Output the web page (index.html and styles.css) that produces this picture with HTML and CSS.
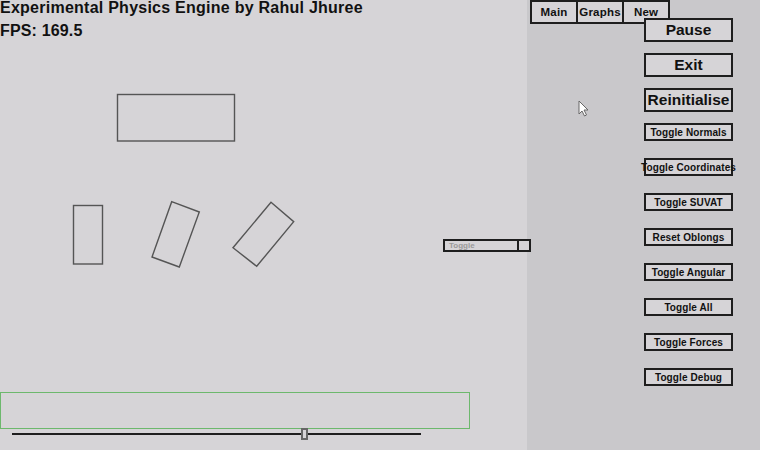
FILE: index.html
```html
<!DOCTYPE html>
<html>
<head>
<meta charset="utf-8">
<link rel="stylesheet" href="styles.css">
</head>
<body>
<div class="app">
  <div class="main">
    <svg class="world" width="527" height="450" viewBox="0 0 527 450">
      <g fill="none" stroke="#555" stroke-width="1.4">
        <rect x="117.5" y="94.5" width="117" height="46.5"/>
        <rect x="73.5" y="205.5" width="29" height="58.5"/>
        <polygon points="171.7,201.7 199.3,212 179.3,267 152,257"/>
        <polygon points="271,202.3 293.7,221.7 256.7,266.3 233,247.7"/>
      </g>
    </svg>
    <div class="title">Experimental Physics Engine by Rahul Jhuree</div>
    <div class="fps">FPS: 169.5</div>
    <div class="spacer"></div>
    <div class="console"></div>
    <div class="slider"><div class="knob"></div></div>
  </div>
  <div class="panel">
    <div class="tabs">
      <div class="tab">Main</div>
      <div class="tab">Graphs</div>
      <div class="tab">New</div>
    </div>
    <div class="buttons">
      <div class="btn big">Pause</div>
      <div class="btn big">Exit</div>
      <div class="btn big">Reinitialise</div>
      <div class="btn small">Toggle Normals</div>
      <div class="btn small">Toggle Coordinates</div>
      <div class="btn small">Toggle SUVAT</div>
      <div class="btn small">Reset Oblongs</div>
      <div class="btn small">Toggle Angular</div>
      <div class="btn small">Toggle All</div>
      <div class="btn small">Toggle Forces</div>
      <div class="btn small">Toggle Debug</div>
    </div>
  </div>
  <div class="toggle"><span class="toggle-label">Toggle</span><span class="toggle-box"></span></div>
  <svg class="cursor" width="12" height="18" viewBox="0 0 12 18">
    <path d="M1 1 L1 14 L4 11 L6.5 16 L8.5 15 L6 10 L10 10 Z" fill="#fff" stroke="#666" stroke-width="1" stroke-linejoin="round"/>
  </svg>
</div>
</body>
</html>
```

FILE: styles.css
```css
html, body {
  margin: 0;
  padding: 0;
}
body {
  width: 760px;
  height: 450px;
  overflow: hidden;
  background: #d6d4d7;
  font-family: "Liberation Sans", Arial, sans-serif;
  color: #111;
}
.app {
  position: relative;
  display: flex;
  width: 760px;
  height: 450px;
}
.main {
  position: relative;
  width: 527px;
  height: 450px;
  display: flex;
  flex-direction: column;
  padding-bottom: 15px;
  box-sizing: border-box;
}
.world {
  position: absolute;
  left: 0;
  top: 0;
}
.title {
  position: relative;
  font-weight: bold;
  font-size: 16px;
  line-height: 16px;
  letter-spacing: 0.25px;
  white-space: nowrap;
}
.fps {
  position: relative;
  font-weight: bold;
  font-size: 16px;
  line-height: 16px;
  letter-spacing: 0.15px;
  margin-top: 7px;
}
.spacer {
  flex: 1;
}
.console {
  width: 470px;
  height: 37px;
  box-sizing: border-box;
  border: 1px solid #6db86d;
}
.slider {
  position: relative;
  margin-top: 4px;
  margin-left: 12px;
  width: 409px;
  height: 2px;
  background: #1e1e1e;
}
.knob {
  position: absolute;
  left: 289px;
  top: -5px;
  width: 7px;
  height: 12px;
  box-sizing: border-box;
  border: 2px solid #666;
  background: #d6d4d7;
}
.panel {
  width: 233px;
  height: 450px;
  background: #c9c8cb;
  display: flex;
  flex-direction: column;
}
.tabs {
  display: flex;
  padding-left: 3px;
}
.tab {
  width: 48px;
  height: 24px;
  box-sizing: border-box;
  border: 2px solid #1e1e1e;
  margin-right: -2px;
  background: #d6d4d7;
  font-weight: bold;
  font-size: 11.5px;
  letter-spacing: 0.2px;
  display: flex;
  align-items: center;
  justify-content: center;
}
.buttons {
  margin-top: -6px;
  margin-left: 117px;
  width: 89px;
  display: flex;
  flex-direction: column;
  gap: 11px;
}
.btn {
  position: relative;
  box-sizing: border-box;
  border: 2px solid #1e1e1e;
  background: #d6d4d7;
  font-weight: bold;
  display: flex;
  align-items: center;
  justify-content: center;
  white-space: nowrap;
}
.btn.big {
  height: 24px;
  font-size: 15.5px;
}
.btn.small {
  height: 18px;
  font-size: 10px;
  letter-spacing: 0.1px;
}
.btn.small + .btn.small {
  margin-top: 6px;
}
.toggle {
  position: absolute;
  left: 443px;
  top: 239px;
  width: 88px;
  height: 13px;
  box-sizing: border-box;
  border: 2px solid #1e1e1e;
  background: #d6d4d7;
  display: flex;
}
.toggle-label {
  flex: 1;
  font-size: 8px;
  font-weight: bold;
  color: #9a9a9a;
  line-height: 9px;
  padding-left: 4px;
}
.toggle-box {
  width: 10px;
  border-left: 2px solid #1e1e1e;
}
.cursor {
  position: absolute;
  left: 578px;
  top: 100px;
}
```
